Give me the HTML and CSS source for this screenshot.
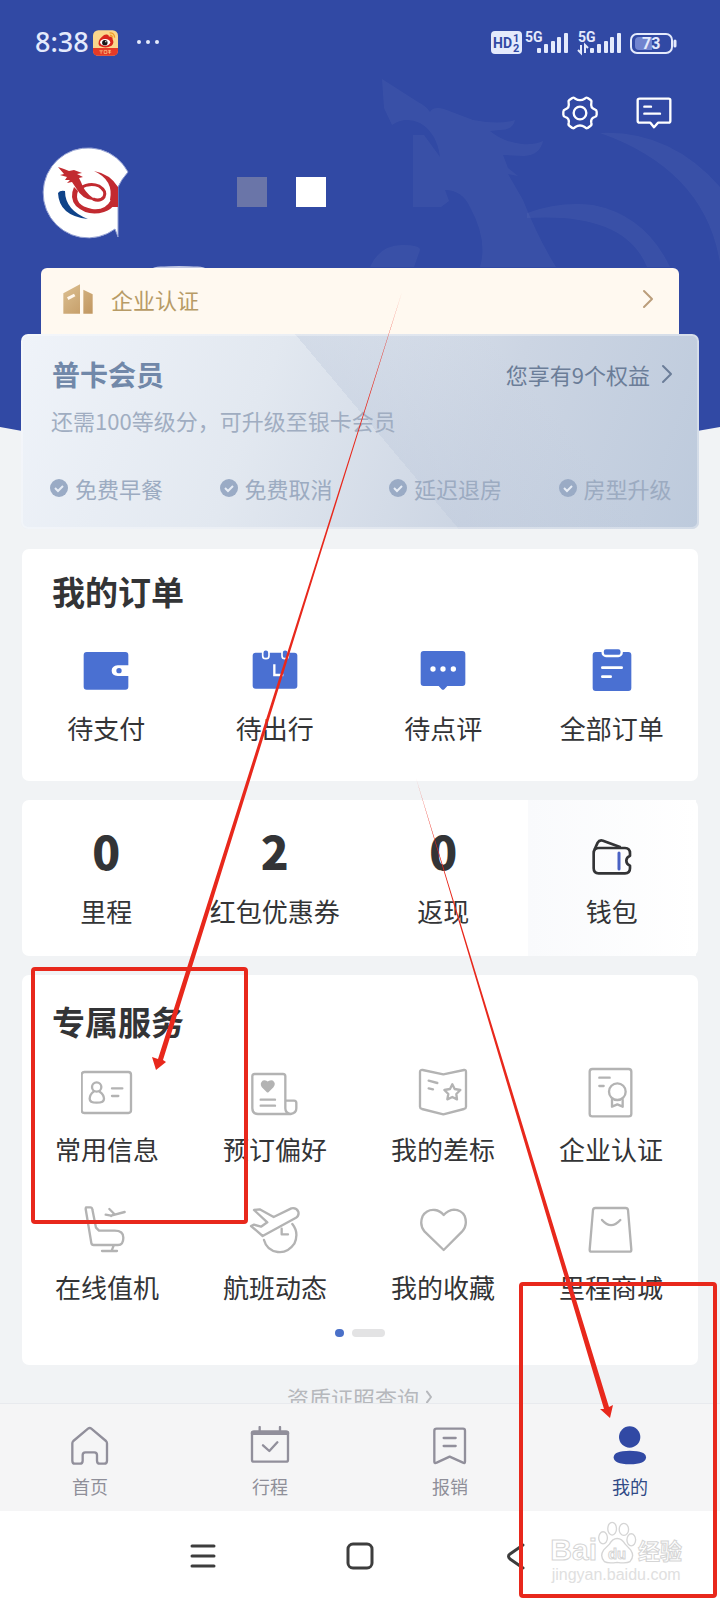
FILE: index.html
```html
<!DOCTYPE html>
<html lang="zh-CN">
<head>
<meta charset="utf-8">
<meta name="viewport" content="width=device-width, initial-scale=1">
<title>我的</title>
<link rel="stylesheet" href="styles.css">
</head>
<body>
<div class="app">
  <svg class="hero-bg" viewBox="0 0 720 470" preserveAspectRatio="none" aria-hidden="true">
    <path fill="#3149a4" d="M0 0H720V427Q360 495 0 427Z"/>
    <g fill="#fff" fill-opacity=".045">
      <path d="M382 79L418 102Q426 106 430 112Q433 106 444 109L473 120Q500 125 515 120Q513 130 500 130L490 131Q503 142 522 144Q534 145 543 141Q540 155 524 156L503 155L508 168L518 176L508 174L523 200Q538 238 556 267H480Q488 240 470 207Q462 190 445 190L449 201L441 207H413V135L424 135L440 157Q437 133 420 123Q405 116 392 125L384 108Z"/>
      <path d="M600 133Q670 130 720 187V263Q705 170 600 133Z"/>
      <path d="M527 213Q560 201 593 205Q645 215 670 267H647Q625 212 527 218Z"/>
      <path d="M370 267Q380 245 402 245Q420 245 420 250L414 267Z"/>
    </g>
  </svg>

  <header class="status">
    <span class="clock">8:38</span>
    <svg class="weibo" viewBox="279 91 74 76" aria-hidden="true">
      <rect x="279" y="91" width="74" height="76" rx="16" fill="#fbd68c"/>
      <path d="M279 144H353V151Q353 167 337 167H295Q279 167 279 151Z" fill="#e63a26"/>
      <path d="M318 104Q326 103 326 110Q338 109 337 118Q343 129 334 137Q316 147 298 137Q290 124 305 111Q312 104 318 104Z" fill="#d9261c"/>
      <ellipse cx="315" cy="127" rx="15" ry="10" fill="#fff"/><circle cx="314" cy="128" r="8" fill="#181818"/><circle cx="317" cy="125" r="2" fill="#fff"/>
      <path d="M328 99Q342 98 343 113M329 106Q336 106 336 113" stroke="#f19b28" stroke-width="4" fill="none"/>
      <path d="M298 152h10M303 152v9M312 151h8v9h-8zM324 151h8M328 151v10M323 156h10" stroke="#fbd68c" stroke-width="2" fill="none"/>
    </svg>
    <svg class="more" viewBox="0 0 24 6" aria-hidden="true"><g fill="#e4eafc"><circle cx="3" cy="3" r="2"/><circle cx="12" cy="3" r="2"/><circle cx="21" cy="3" r="2"/></g></svg>
    <svg class="signals" viewBox="0 0 190 30" role="img" aria-label="HD 5G 5G 73%">
      <rect x="1" y="3" width="31" height="23" rx="4" fill="#e4eafc"/>
      <g class="sig-text" fill="#3149a4"><text x="3" y="20" font-size="14">HD</text><text x="23" y="14" font-size="11">1</text><text x="23" y="24" font-size="11">2</text></g>
      <g class="sig-text" fill="#e4eafc" font-size="14"><text x="35" y="14">5G</text><text x="88" y="14">5G</text></g>
      <g fill="#e4eafc"><rect x="47" y="20" width="4" height="5" rx="1"/><rect x="54" y="16" width="4" height="9" rx="1"/><rect x="61" y="13" width="4" height="12" rx="1"/><rect x="67" y="9" width="4" height="16" rx="1"/><rect x="74" y="5" width="4" height="20" rx="1"/><rect x="100" y="20" width="4" height="5" rx="1"/><rect x="107" y="16" width="4" height="9" rx="1"/><rect x="114" y="13" width="4" height="12" rx="1"/><rect x="120" y="9" width="4" height="16" rx="1"/><rect x="127" y="5" width="4" height="20" rx="1"/></g>
      <path d="M91 17V25L88 22M95 25V17L98 20" stroke="#e4eafc" stroke-width="2" fill="none"/>
      <rect x="141" y="6" width="41" height="19" rx="6" fill="none" stroke="#e4eafc" stroke-width="2"/>
      <path d="M149 9H162V22H149Q145 22 145 18V13Q145 9 149 9Z" fill="#7184cf"/>
      <path d="M185 13V18" stroke="#e4eafc" stroke-width="3" stroke-linecap="round"/>
      <text class="sig-text" x="152" y="21" font-size="16" fill="#e4eafc">73</text>
    </svg>
  </header>

  <div class="toolbar">
    <button class="tool" aria-label="设置"><svg viewBox="608 286 108 108"><g fill="none" stroke="#fff" stroke-width="7" stroke-linejoin="round"><path d="M639 295Q644 292 648 297Q662 306 676 297Q680 292 685 295L694 301Q698 304 696 310Q693 325 706 329Q712 331 712 336V345Q712 350 706 352Q693 356 696 370Q698 376 693 379L685 385Q680 387 676 382Q662 373 648 382Q644 387 639 385L631 379Q626 376 628 370Q631 356 618 352Q612 350 612 345V336Q612 331 618 329Q631 325 628 310Q626 304 630 301Z"/><circle cx="662" cy="340" r="19"/></g></svg></button>
    <button class="tool" aria-label="消息"><svg viewBox="828 286 108 108"><g fill="none" stroke="#fff" stroke-width="7" stroke-linejoin="round" stroke-linecap="round"><path d="M839 297H926Q931 297 931 302V364Q931 369 926 369H894L882 383L871 369H839Q833 369 833 364V302Q833 297 839 297Z"/><path d="M853 321H873M853 342H900"/></g></svg></button>
  </div>

  <div class="profile">
    <svg class="avatar" viewBox="42 147 88 92" role="img" aria-label="头像">
      <path fill="#fff" stroke="#93a0d3" stroke-width="1" d="M128 172A45 45 0 1 0 115 229L118 237V187Q121 180 128 172Z"/>
      <g fill="#c22a30">
        <path d="M58 167L64 169L69 171L74 170L82 173L77 174L83 177L79 178L81 182L83 187Q88 196 97 200Q84 202 76 188L72 182L67 183L70 180L65 180L67 177L60 175L64 174Z"/>
        <path d="M94 171Q110 174 118 187V207H112Q113 202 110 200Q114 180 94 171Z"/>
        <path d="M74 187Q69 198 76 206Q88 217 104 212Q112 209 115 204L111 200Q105 211 92 209Q73 205 78 191Z"/>
      </g>
      <path d="M80 188Q90 182 99 186Q107 191 104 197Q100 202 93 199" fill="none" stroke="#c22a30" stroke-width="3"/>
      <path fill="#0f4389" d="M58 193Q60 190 65 191Q65 210 88 219Q59 216 58 193Z"/>
    </svg>
    <span class="mask mask-dim"></span><span class="mask"></span>
  </div>

  <a class="cert" href="#cert">
    <svg class="cert-icon" viewBox="187 77 90 90" aria-hidden="true"><defs><linearGradient id="gold" x1="0" y1="0" x2="1" y2="1"><stop offset="0" stop-color="#dcc091"/><stop offset="1" stop-color="#c19761"/></linearGradient></defs><path fill="url(#gold)" d="M188 105L238 78V166H188ZM248 94L276 108V166H248Z"/><path d="M201 121L222 110" stroke="#fff8ee" stroke-width="9"/></svg>
    <span>企业认证</span>
    <svg class="chev gold" viewBox="0 0 12 20" aria-hidden="true"><path d="M2 2L10 10L2 18"/></svg>
  </a>

  <section class="member">
    <div class="member-top">
      <h2 class="member-name">普卡会员</h2>
      <a class="rights" href="#rights">您享有9个权益<svg class="chev" viewBox="0 0 12 20" aria-hidden="true"><path d="M2 2L10 10L2 18"/></svg></a>
    </div>
    <p class="member-tip">还需100等级分，可升级至银卡会员</p>
    <ul class="perks">
      <li><svg class="tick" viewBox="0 0 18 18" aria-hidden="true"><circle cx="9" cy="9" r="9"/><path d="M5 9L8 12L13 7"/></svg>免费早餐</li>
      <li><svg class="tick" viewBox="0 0 18 18" aria-hidden="true"><circle cx="9" cy="9" r="9"/><path d="M5 9L8 12L13 7"/></svg>免费取消</li>
      <li><svg class="tick" viewBox="0 0 18 18" aria-hidden="true"><circle cx="9" cy="9" r="9"/><path d="M5 9L8 12L13 7"/></svg>延迟退房</li>
      <li><svg class="tick" viewBox="0 0 18 18" aria-hidden="true"><circle cx="9" cy="9" r="9"/><path d="M5 9L8 12L13 7"/></svg>房型升级</li>
    </ul>
  </section>

  <section class="card orders">
    <h2 class="title">我的订单</h2>
    <div class="grid">
      <a class="cell" href="#pay"><svg viewBox="247 321 144 144" aria-hidden="true"><path fill="#4a70d2" d="M261 336H377Q386 336 386 345V376H354Q336 378 336 392Q336 406 354 408H386V440Q386 449 377 449H261Q252 449 252 440V345Q252 336 261 336Z"/><circle cx="358" cy="392" r="8" fill="#4a70d2"/></svg>待支付</a>
      <a class="cell" href="#trip"><svg viewBox="752 321 144 144" aria-hidden="true"><rect x="757" y="338" width="134" height="108" rx="9" fill="#4a70d2"/><g fill="#4a70d2" stroke="#fff" stroke-width="5"><rect x="787" y="329" width="19" height="27" rx="9"/><rect x="845" y="329" width="19" height="27" rx="9"/></g><path d="M822 373V405H849" fill="none" stroke="#fff" stroke-width="7"/></svg>待出行</a>
      <a class="cell" href="#review"><svg viewBox="177 321 144 144" aria-hidden="true"><path fill="#4a70d2" d="M191 333H307Q316 333 316 342V429Q316 438 307 438H262L253 448Q249 451 245 448L236 438H191Q182 438 182 429V342Q182 333 191 333Z"/><g fill="#fff"><circle cx="219" cy="387" r="8"/><circle cx="249" cy="387" r="8"/><circle cx="280" cy="387" r="8"/></g></svg>待点评</a>
      <a class="cell" href="#orders"><svg viewBox="685 321 144 144" aria-hidden="true"><rect x="699" y="336" width="116" height="117" rx="9" fill="#4a70d2"/><rect x="729" y="324" width="57" height="24" rx="10" fill="#4a70d2" stroke="#fff" stroke-width="7"/><path d="M728 383H786M728 410H753" stroke="#fff" stroke-width="8" stroke-linecap="round"/></svg>全部订单</a>
    </div>
  </section>

  <section class="card stats grid">
    <a class="stat" href="#miles"><strong>0</strong>里程</a>
    <a class="stat" href="#coupons"><strong>2</strong>红包优惠券</a>
    <a class="stat" href="#cashback"><strong>0</strong>返现</a>
    <a class="stat wallet" href="#wallet"><svg viewBox="680 861 150 150" aria-hidden="true"><g fill="none" stroke="#333436" stroke-width="8" stroke-linejoin="round"><path d="M715 924H794Q809 924 809 940V947Q798 952 798 962Q798 972 809 977V985Q809 1000 794 1000H715Q700 1000 700 985V940Q700 924 715 924Z"/><path d="M702 930L712 908Q717 899 728 902L781 922"/></g><path d="M776 939V987" stroke="#4a62c4" stroke-width="9" stroke-linecap="round"/></svg>钱包</a>
  </section>

  <section class="card services">
    <h2 class="title">专属服务</h2>
    <div class="grid">
      <a class="cell" href="#info"><svg class="line" viewBox="247 348 156 156" aria-hidden="true"><rect x="249" y="366" width="148" height="123" rx="8"/><circle cx="294" cy="411" r="14"/><path d="M285 425Q273 434 273 446Q273 458 294 458Q316 458 316 446Q316 434 303 425M340 415H371M340 438H359"/></svg>常用信息</a>
      <a class="cell" href="#prefer"><svg class="line" viewBox="751 348 156 156" aria-hidden="true"><path d="M876 492H778Q761 492 761 475V379Q761 372 768 372H853Q860 372 860 379V475Q860 490 876 492Q893 490 893 475V459Q893 452 886 452H862M786 449H829M786 467H829"/><path d="M807 424L792 409Q787 401 794 395Q801 393 807 399Q814 393 821 395Q828 401 822 409Z" fill="#b3b3b3"/></svg>预订偏好</a>
      <a class="cell" href="#policy"><svg class="line" viewBox="174 348 156 156" aria-hidden="true"><path d="M191 360L253 373L315 360Q321 359 321 366V470Q321 475 315 477L253 493L189 477Q183 475 183 470V366Q183 359 191 360ZM209 392L235 399M209 415L222 418M280 403L287 417L304 420L292 432L294 448L280 441L265 448L268 432L256 420L273 417Z"/></svg>我的差标</a>
      <a class="cell" href="#company"><svg class="line" viewBox="678 348 156 156" aria-hidden="true"><rect x="692" y="357" width="125" height="142" rx="8"/><circle cx="775" cy="425" r="25"/><path d="M721 383H752M721 408H734M759 449V470L775 463L791 470V449"/></svg>企业认证</a>
      <a class="cell" href="#checkin"><svg class="line" viewBox="247 762 156 156" aria-hidden="true"><path d="M262 772H275Q280 772 281 778L292 833L301 842H348Q374 842 374 863Q374 885 358 885H285Q279 885 278 879L261 777ZM345 887L339 902M310 903H355"/><path d="M321 794L337 797L378 786M332 777L347 792L337 798"/></svg>在线值机</a>
      <a class="cell" href="#flights"><svg class="line" viewBox="751 762 156 156" aria-hidden="true"><path d="M766 780L783 778L825 801L878 775Q893 772 899 785Q902 797 892 803L792 858L757 828L766 824L787 830L806 817ZM881 822Q902 848 887 881Q867 910 837 906Q804 901 796 870M849 836V853H868"/></svg>航班动态</a>
      <a class="cell" href="#favorites"><svg class="line" viewBox="174 762 156 156" aria-hidden="true"><path d="M254 900L197 845Q180 825 191 798Q204 777 228 780Q243 782 254 795Q267 781 285 779Q307 780 317 798Q327 825 309 845Z"/></svg>我的收藏</a>
      <a class="cell" href="#mall"><svg class="line" viewBox="678 762 156 156" aria-hidden="true"><path d="M709 774H800Q806 774 807 780L817 899Q817 905 811 905H698Q692 905 692 899L702 780Q703 774 709 774ZM729 810Q756 841 784 810"/></svg>里程商城</a>
    </div>
    <div class="pager" aria-hidden="true"><i class="dot"></i><i class="pill"></i></div>
  </section>

  <div class="license"><a href="#license">资质证照查询<svg class="chev thin" viewBox="0 0 12 20" aria-hidden="true"><path d="M3 2L9 10L3 18"/></svg></a></div>

  <nav class="tabs">
    <a class="tab" href="#home"><svg viewBox="210 258 120 120" aria-hidden="true"><path d="M264 266Q269 262 274 266L318 303Q321 306 321 310V362Q321 371 312 371H300Q291 371 291 362V345Q291 337 283 337H256Q248 337 248 345V362Q248 371 239 371H225Q217 371 217 362V310Q217 306 220 303Z"/></svg>首页</a>
    <a class="tab" href="#trips"><svg viewBox="750 258 120 120" aria-hidden="true"><rect x="756" y="274" width="108" height="91" rx="6"/><path d="M758 279H862" stroke-width="12"/><path d="M779 272V261M840 272V261M789 316L808 333L832 307"/></svg>行程</a>
    <a class="tab" href="#expense"><svg viewBox="210 258 120 120" aria-hidden="true"><path d="M230 266H309Q315 266 315 272V365Q315 371 309 368L269 350L230 368Q223 371 223 365V272Q223 266 230 266ZM251 294H287M251 318H287"/></svg>报销</a>
    <a class="tab active" href="#me" aria-current="page"><svg viewBox="750 258 120 120" aria-hidden="true"><circle cx="809" cy="291" r="32"/><path d="M809 332Q858 332 858 352Q858 373 809 373Q761 373 761 352Q761 332 809 332Z"/></svg>我的</a>
  </nav>

  <nav class="sysnav" aria-label="系统导航">
    <button aria-label="菜单"><svg viewBox="0 0 30 30"><path d="M4 5H26M4 15H26M4 25H26"/></svg></button>
    <button aria-label="主屏幕"><svg viewBox="0 0 30 30"><rect x="3" y="3" width="24" height="24" rx="5"/></svg></button>
    <button aria-label="返回"><svg viewBox="0 0 30 30"><path d="M21 4L8 13Q5 15 8 18L21 27"/></svg></button>
  </nav>

  <div class="stamp">
    <div class="stamp-logo"><span class="stamp-en">Bai</span><svg viewBox="705 545 122 128" aria-hidden="true"><g fill="#fff" stroke="#d5d5d5" stroke-width="4"><ellipse cx="750" cy="568" rx="13" ry="19"/><ellipse cx="785" cy="570" rx="14" ry="18"/><ellipse cx="723" cy="595" rx="13" ry="18"/><ellipse cx="807" cy="601" rx="13" ry="18"/><path d="M765 597Q779 597 789 614L805 631Q818 650 803 666Q793 672 765 668Q737 672 727 666Q712 650 725 631L742 614Q751 597 765 597Z"/></g><text class="paw-text" x="738" y="657">du</text></svg><span class="stamp-cn">经验</span></div>
    <span class="stamp-url">jingyan.baidu.com</span>
  </div>

  <svg class="marks" viewBox="0 0 720 1600" preserveAspectRatio="none" aria-hidden="true">
    <g fill="none" stroke="#e8281c" stroke-width="4"><rect x="33" y="969" width="213" height="253" rx="2"/><rect x="521" y="1284" width="194" height="312" rx="2"/></g>
    <g fill="#e8281c"><path d="M402 292L163 1060L166 1062L156 1070L152 1057L158 1059Z"/><path d="M416 778L609 1407L613 1405L610 1418L600 1409L604 1409Z"/></g>
  </svg>
</div>
</body>
</html>
```
FILE: styles.css
```css
* { box-sizing: border-box; }
body {
  margin: 0;
  background: #f1f3f5;
  color: #333436;
  font-family: "Noto Sans CJK SC", "Noto Sans", sans-serif;
}
h2, p, ul { margin: 0; padding: 0; }
a { color: inherit; text-decoration: none; }
button { border: 0; padding: 0; background: none; display: flex; align-items: center; justify-content: center; }
svg { display: block; flex: none; }

.app { position: relative; min-height: 100vh; display: flex; flex-direction: column; overflow: hidden; }
.hero-bg { position: absolute; top: 0; left: 0; width: 100%; height: 470px; z-index: -1; }

.status { display: flex; align-items: center; height: 84px; padding: 0 40px 0 35px; }
.clock { font: 500 27px/36px "Noto Sans", sans-serif; color: #e4eafc; }
.weibo { width: 25px; height: 26px; margin: 2px 0 0 4px; }
.more { width: 24px; height: 6px; margin-left: 18px; }
.signals { width: 190px; height: 30px; margin: 2px 0 0 auto; }
.sig-text { font-family: Roboto, sans-serif; font-weight: 700; }

.toolbar { display: flex; justify-content: flex-end; gap: 38px; padding: 11px 48px 16px; }
.tool svg { width: 36px; height: 36px; }

.profile { display: flex; align-items: center; padding-left: 42px; margin-bottom: 29px; }
.avatar { width: 88px; height: 92px; margin-right: 107px; }
.mask { width: 30px; height: 30px; background: #fff; margin-right: 29px; margin-bottom: 2px; }
.mask-dim { background: #6a75a8; }

.chev { width: 12px; height: 20px; fill: none; stroke: currentColor; stroke-width: 2; stroke-linecap: round; stroke-linejoin: round; }
.cert {
  display: flex; align-items: center; height: 66px; margin: 0 41px; padding: 0 25px 4px 22px;
  background: #fff9f0; border-radius: 6px 6px 0 0; color: #b79b66; font-size: 22px; position: relative;
}
.cert::before { content: ""; position: absolute; left: 112px; top: -2px; width: 52px; height: 4px; border-radius: 50%; background: #ffffffb0; }
.cert-icon { width: 30px; height: 30px; margin-right: 18px; }
.gold { margin-left: auto; color: #bb9e7b; }

.member {
  margin: 0 21px 20px; padding: 22px 0 26px; border-radius: 7px;
  box-shadow: inset 0 0 0 2px #ffffff55;
  background: linear-gradient(50deg, transparent 52%, #b9c5d955 52%, transparent 75%), linear-gradient(110deg, #eff3f9 0%, #e2e8f0 35%, #ccd5e3 68%, #bdcadc 100%);
}
.member-top { display: flex; align-items: center; justify-content: space-between; padding: 0 26px 0 31px; }
.member-name { font-size: 28px; line-height: 36px; font-weight: 700; color: #7188a9; }
.rights { display: flex; align-items: center; gap: 11px; font-size: 22px; line-height: 30px; color: #6b7d98; }
.member-tip { margin-top: 13px; padding-left: 30px; font-size: 22px; line-height: 30px; color: #a0adc1; }
.perks { display: grid; grid-template-columns: repeat(4, 1fr); margin-top: 38px; list-style: none; }
.perks li { display: flex; align-items: center; gap: 7px; padding-left: 29px; font-size: 22px; line-height: 30px; color: #9cabc1; white-space: nowrap; }
.tick { width: 18px; height: 18px; fill: #9aabc5; }
.tick path { fill: none; stroke: #e6ecf5; stroke-width: 2; }

.card { margin: 0 22px 19px; background: #fff; border-radius: 7px; }
.title { padding-left: 30px; font-size: 33px; line-height: 40px; font-weight: 700; }
.grid { display: grid; grid-template-columns: repeat(4, 1fr); }
.cell, .stat { display: flex; flex-direction: column; align-items: center; font-size: 26px; line-height: 36px; white-space: nowrap; }
.orders { padding: 22px 0 35px; }
.orders .grid { margin-top: 36px; }
.orders .cell { gap: 15px; }
.orders svg { width: 48px; height: 48px; }
.orders .grid, .stats { padding-right: 2px; }

.stat { padding: 25px 0 27px; gap: 18px; }
.stat strong { font-size: 46px; line-height: 50px; font-weight: 900; }
.stat.wallet { padding-top: 27px; gap: 16px; background: linear-gradient(90deg, #f9fafc, #fff); }
.wallet svg { width: 50px; height: 50px; }

.services { padding: 26px 0 28px; margin-bottom: 0; }
.services .grid { margin-top: 25px; padding: 0 3px 0 1px; row-gap: 37px; }
.services .cell { gap: 13px; }
.line { width: 52px; height: 52px; fill: none; stroke: #b3b3b3; stroke-width: 7; stroke-linecap: round; stroke-linejoin: round; }
.pager { display: flex; justify-content: center; gap: 8px; margin-top: 24px; }
.dot { width: 9px; height: 8px; border-radius: 4px; background: #4a70c8; }
.pill { width: 33px; height: 8px; border-radius: 4px; background: #e3e3e4; }

.license { height: 38px; padding-top: 16px; overflow: hidden; color: #b6b8bc; font-size: 22px; line-height: 32px; }
.license a { display: flex; justify-content: center; align-items: center; gap: 6px; }
.thin { width: 8px; height: 14px; stroke-width: 3; }

.tabs { display: grid; grid-template-columns: repeat(4, 1fr); padding: 22px 0 13px; border-top: 1px solid #e8eaee; background: #f5f5f6; }
.tab { display: flex; flex-direction: column; align-items: center; gap: 8px; font-size: 18px; line-height: 24px; color: #8f8f99; }
.tab svg { width: 40px; height: 40px; fill: none; stroke: #918f9b; stroke-width: 7; stroke-linecap: round; stroke-linejoin: round; }
.tab.active { color: #304a86; }
.tab.active svg { fill: #3149a4; stroke: none; }

.sysnav { display: flex; flex: 1; justify-content: center; align-items: center; gap: 127px; min-height: 89px; background: #fff; }
.sysnav svg { width: 30px; height: 30px; fill: none; stroke: #3d3d3d; stroke-width: 3; stroke-linecap: round; stroke-linejoin: round; }

.stamp { position: absolute; right: 38px; bottom: 14px; display: flex; flex-direction: column; align-items: center; color: #fff; -webkit-text-stroke: 1px #d5d5d5; }
.stamp-logo { display: flex; align-items: flex-end; }
.stamp-logo svg { width: 41px; height: 43px; }
.stamp-en { font: 700 30px/28px "Liberation Sans", sans-serif; }
.stamp-cn { font-size: 22px; line-height: 30px; font-weight: 700; }
.paw-text { font: 700 44px "Liberation Sans", sans-serif; fill: #fff; stroke: #d5d5d5; stroke-width: 3; -webkit-text-stroke: 3px #d5d5d5; }
.stamp-url { font: 16px/22px "Liberation Sans", sans-serif; color: #e0e0e0; -webkit-text-stroke: 0; }

.marks { position: absolute; top: 0; left: 0; width: 100%; height: 100%; pointer-events: none; }
```
